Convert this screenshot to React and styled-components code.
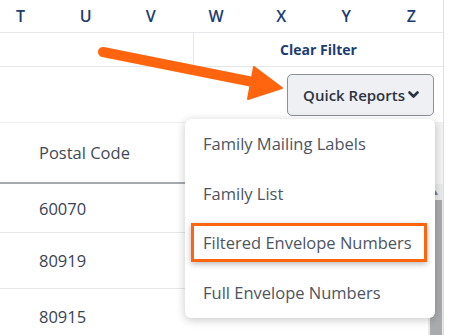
import React from 'react';
import styled, { createGlobalStyle } from 'styled-components';

const GlobalStyle = createGlobalStyle`
  body {
    margin: 0;
    background: #fff;
    font-family: "Open Sans", "Liberation Sans", sans-serif;
  }
`;

const letters = ['T', 'U', 'V', 'W', 'X', 'Y', 'Z'];

const reportItems = [
  { label: 'Family Mailing Labels' },
  { label: 'Family List' },
  { label: 'Filtered Envelope Numbers', highlighted: true },
  { label: 'Full Envelope Numbers' }
];

const rows = [
  { postal: '60070', height: 48 },
  { postal: '80919', height: 55 },
  { postal: '80915', height: 55 }
];

const Page = styled.div`
  position: relative;
  width: 454px;
  height: 335px;
  overflow: hidden;
`;

const Panel = styled.div`
  width: 443px;
  height: 335px;
  border-right: 1px solid #dedfe2;
  overflow: hidden;
`;

const LetterRow = styled.div`
  display: flex;
  width: 456px;
  height: 32px;
  margin-left: -12px;
  border-bottom: 1px solid #e6e7ea;
`;

const Letter = styled.div`
  flex: 1;
  display: flex;
  align-items: center;
  justify-content: center;
  font-size: 16px;
  font-weight: 600;
  color: #1d3c70;
`;

const FilterRow = styled.div`
  display: grid;
  grid-template-columns: 193px 1fr;
  height: 33px;
  border-bottom: 1px solid #e6e7ea;
`;

const FilterCell = styled.div`
  display: flex;
  align-items: center;
  justify-content: center;
  border-left: ${p => (p.divided ? '1px solid #e6e7ea' : 'none')};
  font-size: 14px;
  font-weight: 700;
  color: #1d3c70;
`;

const ActionRow = styled.div`
  display: flex;
  align-items: center;
  justify-content: flex-end;
  height: 55px;
  padding-right: 9px;
  border-bottom: 1px solid #eeeff1;
`;

const QuickButton = styled.button`
  display: flex;
  align-items: center;
  gap: 3px;
  height: 42px;
  padding: 0 14px 0 15px;
  background: #eef0f4;
  border: 1px solid #8a8f99;
  border-radius: 5px;
  font-family: inherit;
  font-size: 15px;
  font-weight: 600;
  color: #2c3441;
`;

const TableArea = styled.div`
  display: flex;
  height: 212px;
`;

const Table = styled.div`
  flex: 1;
`;

const HeaderRow = styled.div`
  display: flex;
  align-items: center;
  height: 59px;
  border-bottom: 2px solid #a6a9ae;
`;

const BodyRow = styled.div`
  display: flex;
  align-items: center;
  border-bottom: 1px solid #e6e7ea;
`;

const Cell = styled.div`
  padding-left: 39px;
  font-size: 16.5px;
  color: ${p => (p.head ? '#434a55' : '#3a4352')};
  white-space: nowrap;
`;

const Scrollbar = styled.div`
  display: flex;
  flex-direction: column;
  width: 15px;
`;

const ScrollHead = styled.div`
  height: 61px;
  background: #f3f3f4;
`;

const ScrollTrack = styled.div`
  flex: 1;
  display: flex;
  flex-direction: column;
  align-items: center;
  background: #e9e9ea;
`;

const ScrollArrow = styled.div`
  height: 16px;
  font-size: 8px;
  line-height: 16px;
  color: #7a7a7a;
`;

const ScrollThumb = styled.div`
  width: 12px;
  flex: 1;
  background: #aaabad;
`;

const Menu = styled.div`
  position: absolute;
  left: 185px;
  top: 119px;
  width: 250px;
  height: 199px;
  background: #fff;
  border-radius: 6px;
  box-shadow: 0 2px 10px rgba(0, 0, 0, 0.22);
`;

const MenuItem = styled.div`
  display: flex;
  align-items: center;
  height: 49.5px;
  padding: 0 8px 0 6px;
`;

const ItemLabel = styled.div`
  flex: 1;
  display: flex;
  align-items: center;
  height: 33px;
  padding: 0 9px;
  border: 3px solid ${p => (p.highlighted ? '#ff650f' : 'transparent')};
  box-shadow: ${p => (p.highlighted ? '0 2px 6px rgba(0, 0, 0, 0.28)' : 'none')};
  font-size: 16.5px;
  color: #4d5561;
  white-space: nowrap;
`;

const Annotation = styled.svg`
  position: absolute;
  left: 0;
  top: 0;
  pointer-events: none;
`;

const Chevron = () => (
  <svg width="11" height="8" viewBox="0 0 11 8">
    <polyline points="1.5,1.5 5.5,5.5 9.5,1.5" fill="none" stroke="#2c3441" strokeWidth="2.6" strokeLinecap="round" strokeLinejoin="round" />
  </svg>
);

export default function App() {
  return (
    <Page>
      <GlobalStyle />
      <Panel>
        <LetterRow>
          {letters.map(l => (
            <Letter key={l}>{l}</Letter>
          ))}
        </LetterRow>
        <FilterRow>
          <FilterCell />
          <FilterCell divided>Clear Filter</FilterCell>
        </FilterRow>
        <ActionRow>
          <QuickButton>
            Quick Reports
            <Chevron />
          </QuickButton>
        </ActionRow>
        <TableArea>
          <Table>
            <HeaderRow>
              <Cell head>Postal Code</Cell>
            </HeaderRow>
            {rows.map(r => (
              <BodyRow key={r.postal} style={{ height: r.height }}>
                <Cell>{r.postal}</Cell>
              </BodyRow>
            ))}
          </Table>
          <Scrollbar>
            <ScrollHead />
            <ScrollTrack>
              <ScrollArrow>▲</ScrollArrow>
              <ScrollThumb />
            </ScrollTrack>
          </Scrollbar>
        </TableArea>
      </Panel>

      <Menu>
        {reportItems.map(item => (
          <MenuItem key={item.label}>
            <ItemLabel highlighted={item.highlighted}>{item.label}</ItemLabel>
          </MenuItem>
        ))}
      </Menu>

      <Annotation width="454" height="335">
        <line x1="103" y1="52" x2="258" y2="83" stroke="#ff650f" strokeWidth="10" strokeLinecap="round" />
        <polygon points="254,67 282,88 248,99" fill="#ff650f" stroke="#ff650f" strokeWidth="2" strokeLinejoin="round" />
      </Annotation>
    </Page>
  );
}
